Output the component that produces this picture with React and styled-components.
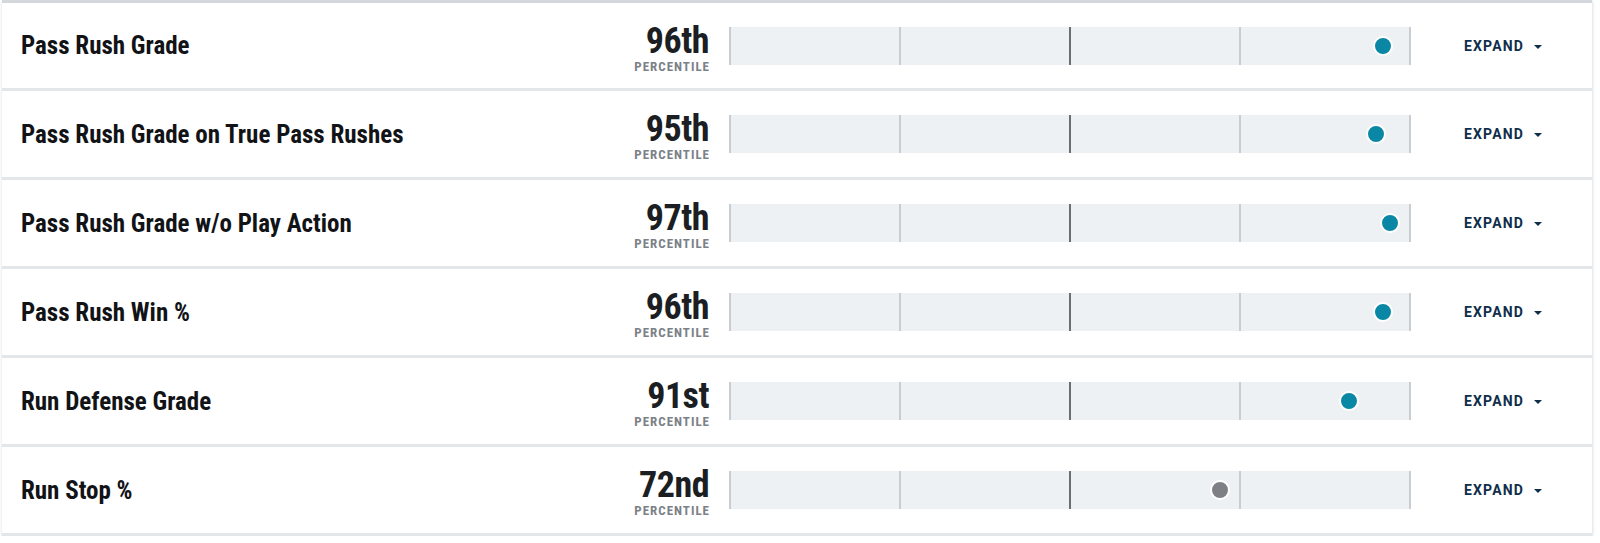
import styled, { createGlobalStyle } from "styled-components";

const GlobalStyle = createGlobalStyle`
  body {
    margin: 0;
    background: #ffffff;
    font-family: "Roboto Condensed", "Noto Sans Condensed", "Noto Sans", "Liberation Sans Narrow", sans-serif;
    font-stretch: condensed;
  }
`;

const Page = styled.div`
  padding: 0 8px 0 2px;
`;

const Card = styled.div`
  background: #ffffff;
  border-top: 3px solid #d4d7db;
  box-shadow: 0 2px 3px rgba(30, 45, 60, 0.12), 1px 0 3px rgba(30, 45, 60, 0.08);
`;

const Row = styled.div`
  display: grid;
  grid-template-columns: 1fr auto 680px 182px;
  align-items: center;
  height: 86px;
  border-bottom: 3px solid #e4e7ea;
  padding-left: 19px;

  &:first-child {
    height: 85px;
  }
`;

const Label = styled.div`
  font-size: 25px;
  font-weight: 700;
  color: #111316;
`;

const Score = styled.div`
  display: flex;
  flex-direction: column;
  align-items: flex-end;
  padding-top: 4px;
  margin-right: 21px;
`;

const Value = styled.div`
  font-size: 36px;
  line-height: 36px;
  font-weight: 700;
  color: #1b1e22;
  letter-spacing: -0.5px;
`;

const Caption = styled.div`
  margin-top: 1px;
  font-size: 13px;
  line-height: 13px;
  font-weight: 700;
  letter-spacing: 1px;
  margin-right: -1px;
  color: #7b8187;
`;

const Track = styled.div`
  position: relative;
  height: 38px;
  background: #eef1f4;
`;

const Tick = styled.span`
  position: absolute;
  top: 0;
  bottom: 0;
  width: 2px;
  margin-left: -1px;
  background: ${(p) => (p.$mid ? "#6a6d71" : "#c9cdd2")};
`;

const Dot = styled.span`
  position: absolute;
  top: 50%;
  width: 16px;
  height: 16px;
  border: 2px solid #ffffff;
  border-radius: 50%;
  transform: translate(-50%, -50%);
  background: ${(p) => (p.$low ? "#7e8085" : "#0b87a6")};
`;

const Expand = styled.button`
  justify-self: center;
  display: flex;
  align-items: center;
  gap: 10px;
  margin-left: 4px;
  padding: 0;
  border: none;
  background: transparent;
  font-family: Roboto, "Liberation Sans", sans-serif;
  font-stretch: normal;
  font-size: 14px;
  font-weight: 700;
  letter-spacing: 1.2px;
  color: #0e2e4a;
  cursor: pointer;
`;

const Caret = styled.span`
  width: 0;
  height: 0;
  margin-top: 2px;
  border-left: 4px solid transparent;
  border-right: 4px solid transparent;
  border-top: 4px solid #0e2e4a;
`;

const rows = [
  { label: "Pass Rush Grade", value: 96, suffix: "th" },
  { label: "Pass Rush Grade on True Pass Rushes", value: 95, suffix: "th" },
  { label: "Pass Rush Grade w/o Play Action", value: 97, suffix: "th" },
  { label: "Pass Rush Win %", value: 96, suffix: "th" },
  { label: "Run Defense Grade", value: 91, suffix: "st" },
  { label: "Run Stop %", value: 72, suffix: "nd" },
];

const ticks = [0, 25, 50, 75, 100];

const App = () => {
  return (
    <Page>
      <GlobalStyle />
      <Card>
        {rows.map((r) => (
          <Row key={r.label}>
            <Label>{r.label}</Label>
            <Score>
              <Value>
                {r.value}
                {r.suffix}
              </Value>
              <Caption>PERCENTILE</Caption>
            </Score>
            <Track>
              {ticks.map((t) => (
                <Tick key={t} $mid={t === 50} style={{ left: `${t}%` }} />
              ))}
              <Dot $low={r.value < 80} style={{ left: `${r.value}%` }} />
            </Track>
            <Expand>
              EXPAND
              <Caret />
            </Expand>
          </Row>
        ))}
      </Card>
    </Page>
  );
};

export default App;
